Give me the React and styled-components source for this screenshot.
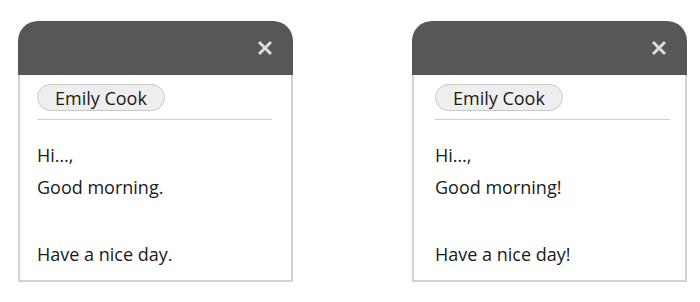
import React from "react";
import styled, { createGlobalStyle } from "styled-components";

const GlobalStyle = createGlobalStyle`
  body {
    margin: 0;
    background: #ffffff;
    font-family: "Open Sans", "Noto Sans", sans-serif;
  }
`;

const Page = styled.div`
  display: flex;
  gap: 119px;
  padding: 21px 0 0 18px;
`;

const Card = styled.div`
  width: 275px;
  display: flex;
  flex-direction: column;
`;

const Header = styled.div`
  height: 54px;
  background: #595755;
  border-radius: 20px 20px 0 0;
  display: flex;
  align-items: center;
  justify-content: flex-end;
  padding-right: 20px;
`;

const CloseButton = styled.button`
  border: none;
  background: none;
  padding: 0;
  width: 16px;
  height: 16px;
  display: flex;
  cursor: pointer;
`;

const Body = styled.div`
  border: 2px solid #d2d2d2;
  border-top: none;
  padding: 9px ${(p) => 19 - p.$shift}px 10px ${(p) => 17 + p.$shift}px;
`;

const Chip = styled.span`
  display: inline-flex;
  align-items: center;
  height: 27px;
  box-sizing: border-box;
  padding: 0 17px;
  border: 1px solid #c8c8c8;
  border-radius: 14px;
  background: #eeeeee;
  color: #1a1a1a;
  font-size: 18px;
`;

const Divider = styled.hr`
  border: none;
  border-top: 1px solid #cfcfcf;
  margin: 8px 0 19px;
`;

const Line = styled.p`
  margin: 0;
  font-size: 18px;
  line-height: 32px;
  height: ${(p) => (p.$blank ? 35 : 32)}px;
  color: #1a1a1a;
`;

const CloseIcon = () => (
  <svg width="16" height="16" viewBox="0 0 16 16">
    <path
      d="M2 2 L14 14 M14 2 L2 14"
      stroke="#dcdcdc"
      strokeWidth="3"
      strokeLinecap="butt"
    />
  </svg>
);

const MessageCard = ({ lines, shift = 0 }) => (
  <Card>
    <Header>
      <CloseButton aria-label="Close">
        <CloseIcon />
      </CloseButton>
    </Header>
    <Body $shift={shift}>
      <Chip>Emily Cook</Chip>
      <Divider />
      {lines.map((l, i) => (
        <Line key={i} $blank={!l}>
          {l}
        </Line>
      ))}
    </Body>
  </Card>
);

export default function App() {
  return (
    <>
      <GlobalStyle />
      <Page>
        <MessageCard lines={["Hi…,", "Good morning.", "", "Have a nice day."]} />
        <MessageCard
          shift={4}
          lines={["Hi…,", "Good morning!", "", "Have a nice day!"]}
        />
      </Page>
    </>
  );
}
